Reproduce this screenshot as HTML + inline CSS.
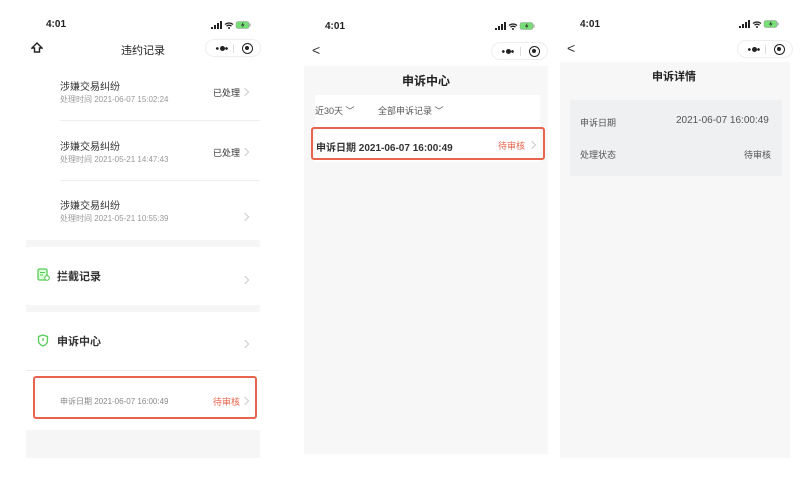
<!DOCTYPE html>
<html><head><meta charset="utf-8"><style>
*{margin:0;padding:0;box-sizing:border-box}
body{width:807px;height:484px;background:#fff;position:relative;overflow:hidden;font-family:"Liberation Sans","Noto Sans CJK SC",sans-serif;color:#333}
.a{position:absolute;white-space:nowrap}
.t{font-size:10px;font-weight:bold;color:#222}
.cap{position:absolute;height:18px;border:1px solid #eee;border-radius:9px;background:#fff}
.cap .d{position:absolute;left:9px;top:7px;width:14px;height:3px}
.cap .d:before{content:"";position:absolute;left:5px;top:-1px;width:5px;height:5px;background:#222;border-radius:50%}
.cap .d:after{content:"";position:absolute;left:0;top:0;width:14px;height:3px;background:radial-gradient(circle,#222 1.2px,transparent 1.5px) 0 0/4.6px 3px repeat-x}
.cap .o{position:absolute;right:7px;top:3px;width:11px;height:11px;border:1.5px solid #222;border-radius:50%}
.cap .o:after{content:"";position:absolute;left:2px;top:2px;width:4px;height:4px;background:#222;border-radius:50%}
.cap .s{position:absolute;left:50%;top:4px;width:1px;height:9px;background:#ddd}
.chev{position:absolute;width:6px;height:6px;border-top:1px solid #ccc;border-right:1px solid #ccc;transform:rotate(45deg)}
</style></head><body>
<svg width="0" height="0" style="position:absolute"><defs><g id="sb"><rect x="0" y="6" width="2" height="2" fill="#222"/><rect x="3" y="4" width="2" height="4" fill="#222"/><rect x="6" y="2" width="2" height="6" fill="#222"/><rect x="9" y="0" width="2" height="8" fill="#222"/><path d="M14 3.5a6 6 0 0 1 8 0M15.5 5.2a3.6 3.6 0 0 1 5 0" stroke="#222" stroke-width="1.3" fill="none"/><circle cx="18" cy="7" r="1" fill="#222"/><rect x="25" y="0.5" width="13" height="7" rx="2" fill="#7d7" stroke="#999" stroke-width=".5"/><path d="M32 1.5l-2 3h2l-1 2.5 2.5-3.5h-2l1-2z" fill="#222"/><rect x="38.5" y="2.5" width="1" height="3" fill="#999"/></g></defs></svg>
<!-- screen 1 -->
<div class="a t" style="left:46px;top:19px;font-size:10px">4:01</div>
<svg class="a" style="left:211px;top:21px" width="42" height="9"><use href="#sb"/></svg>
<svg class="a" style="left:31px;top:42px" width="12" height="12" viewBox="0 0 12 12"><path d="M6 1L1 6h2.5v4h5V6H11z" fill="none" stroke="#222" stroke-width="1.4"/></svg>
<div class="a" style="left:121px;top:42px;font-size:11px;color:#222">违约记录</div>
<div class="cap" style="left:205px;top:39px;width:56px"><span class="d"></span><span class="s"></span><span class="o"></span></div>

<div class="a" style="left:60px;top:78px;font-size:10px;color:#333">涉嫌交易纠纷</div>
<div class="a" style="left:60px;top:94px;font-size:8px;color:#999">处理时间 2021-06-07 15:02:24</div>
<div class="a" style="left:213px;top:86px;font-size:9px;color:#333">已处理</div>
<div class="chev" style="left:242px;top:89px"></div>
<div class="a" style="left:60px;top:120px;width:200px;height:1px;background:#eee"></div>
<div class="a" style="left:60px;top:138px;font-size:10px;color:#333">涉嫌交易纠纷</div>
<div class="a" style="left:60px;top:154px;font-size:8px;color:#999">处理时间 2021-05-21 14:47:43</div>
<div class="a" style="left:213px;top:146px;font-size:9px;color:#333">已处理</div>
<div class="chev" style="left:242px;top:149px"></div>
<div class="a" style="left:60px;top:180px;width:200px;height:1px;background:#eee"></div>
<div class="a" style="left:60px;top:197px;font-size:10px;color:#333">涉嫌交易纠纷</div>
<div class="a" style="left:60px;top:213px;font-size:8px;color:#999">处理时间 2021-05-21 10:55:39</div>
<div class="chev" style="left:242px;top:214px"></div>
<div class="a" style="left:26px;top:240px;width:234px;height:7px;background:#f6f6f6"></div>
<svg class="a" style="left:37px;top:268px" width="13" height="13" viewBox="0 0 13 13"><rect x="1" y="1" width="9" height="11" rx="1.5" fill="#dfd" stroke="#5c5" stroke-width="1.3"/><path d="M3 4.5h5M3 7h3" stroke="#5c5" stroke-width="1.1"/><circle cx="10" cy="10" r="2.3" fill="#fff" stroke="#5c5" stroke-width="1.1"/></svg>
<div class="a" style="left:57px;top:268px;font-size:11px;font-weight:bold;color:#333">拦截记录</div>
<div class="chev" style="left:242px;top:277px"></div>
<div class="a" style="left:26px;top:305px;width:234px;height:7px;background:#f6f6f6"></div>
<svg class="a" style="left:37px;top:334px" width="12" height="13" viewBox="0 0 12 13"><path d="M6 1L1.5 2.5v4c0 3 2 4.5 4.5 5.5 2.5-1 4.5-2.5 4.5-5.5v-4z" fill="none" stroke="#5c5" stroke-width="1.3"/><path d="M6 4v3" stroke="#5c5" stroke-width="1.3"/></svg>
<div class="a" style="left:57px;top:333px;font-size:11px;font-weight:bold;color:#333">申诉中心</div>
<div class="chev" style="left:242px;top:341px"></div>
<div class="a" style="left:26px;top:370px;width:234px;height:1px;background:#eee"></div>
<div class="a" style="left:33px;top:376px;width:224px;height:43px;border:2px solid #e8644f;border-radius:3px"></div>
<div class="a" style="left:60px;top:396px;font-size:8px;color:#888">申诉日期 2021-06-07 16:00:49</div>
<div class="a" style="left:213px;top:395px;font-size:9px;color:#e8644f">待审核</div>
<div class="chev" style="left:242px;top:398px"></div>
<div class="a" style="left:26px;top:430px;width:234px;height:28px;background:#f6f6f6"></div>

<!-- screen 2 -->
<div class="a t" style="left:325px;top:21px">4:01</div>
<svg class="a" style="left:495px;top:22px" width="42" height="9"><use href="#sb"/></svg>
<div class="a" style="left:312px;top:42px;font-size:14px;color:#333">&lt;</div>
<div class="cap" style="left:491px;top:42px;width:57px"><span class="d"></span><span class="s"></span><span class="o"></span></div>
<div class="a" style="left:304px;top:66px;width:244px;height:388px;background:#f7f7f7"></div>
<div class="a" style="left:402px;top:72px;font-size:12px;font-weight:bold;color:#222">申诉中心</div>
<div class="a" style="left:315px;top:95px;width:225px;height:67px;background:#fff"></div>
<div class="a" style="left:315px;top:104px;font-size:9px;color:#555">近30天 ﹀</div>
<div class="a" style="left:378px;top:104px;font-size:9px;color:#555">全部申诉记录 ﹀</div>
<div class="a" style="left:311px;top:127px;width:234px;height:33px;border:2px solid #e8644f;border-radius:3px"></div>
<div class="a" style="left:316px;top:139px;font-size:10px;font-weight:bold;color:#333">申诉日期 2021-06-07 16:00:49</div>
<div class="a" style="left:498px;top:139px;font-size:9px;color:#e8644f">待审核</div>
<div class="chev" style="left:529px;top:142px"></div>

<!-- screen 3 -->
<div class="a t" style="left:580px;top:19px">4:01</div>
<svg class="a" style="left:739px;top:20px" width="42" height="9"><use href="#sb"/></svg>
<div class="a" style="left:567px;top:40px;font-size:14px;color:#333">&lt;</div>
<div class="cap" style="left:737px;top:40px;width:56px"><span class="d"></span><span class="s"></span><span class="o"></span></div>
<div class="a" style="left:560px;top:62px;width:230px;height:396px;background:#f7f7f7"></div>
<div class="a" style="left:652px;top:68px;font-size:11px;font-weight:bold;color:#222">申诉详情</div>
<div class="a" style="left:570px;top:100px;width:212px;height:76px;background:#eff0f2"></div>
<div class="a" style="left:580px;top:116px;font-size:9px;color:#555">申诉日期</div>
<div class="a" style="left:676px;top:115px;font-size:10px;color:#555">2021-06-07 16:00:49</div>
<div class="a" style="left:580px;top:148px;font-size:9px;color:#555">处理状态</div>
<div class="a" style="left:744px;top:148px;font-size:9px;color:#555">待审核</div>
</body></html>
